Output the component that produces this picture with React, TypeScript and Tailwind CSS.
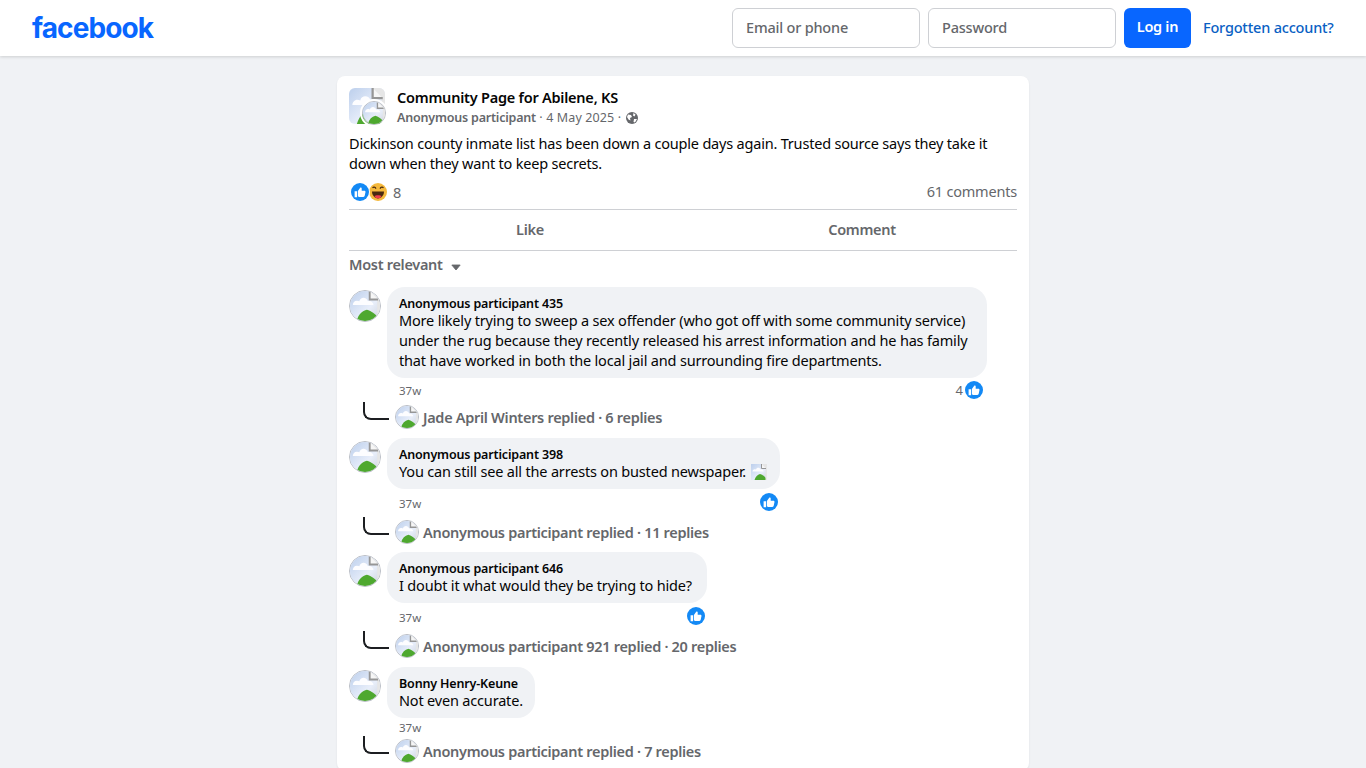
import { ReactNode } from "react";

const FONT = "font-['Noto_Sans','Open_Sans',sans-serif]";

// broken image placeholder, stretched to a circle for the avatars
function BrokenPicture({ className }: { className: string }) {
  return (
    <svg viewBox="0 0 32 32" className={className}>
      <defs>
        <linearGradient id="sky" x1="0" y1="0" x2="1" y2="1">
          <stop offset="0" stopColor="#bccfec" />
          <stop offset="0.6" stopColor="#e8eefa" />
          <stop offset="1" stopColor="#cdd2da" />
        </linearGradient>
      </defs>
      <rect width="32" height="32" fill="url(#sky)" />
      <path d="M3 15c0-3 3-6 7-4 1-5 8-5 9 0 3-1 6 1 6 4z" fill="#fdfdff" />
      <path d="M7 32c2-7 6-11 11-12 5 1 9 5 14 10v2z" fill="#4ea82f" />
      <path d="M21 0h11v32h-3V9h-8z" fill="#e6e6e6" />
      <path d="M21 0v9h9" fill="#f6f6f6" stroke="#969696" strokeWidth="2" />
    </svg>
  );
}

function Avatar({ size }: { size: "lg" | "sm" }) {
  return (
    <div
      className={
        size === "lg"
          ? "w-8 h-8 flex-shrink-0 rounded-full overflow-hidden border border-[#b9bdc5]"
          : "w-6 h-6 flex-shrink-0 rounded-full overflow-hidden border border-[#b9bdc5]"
      }
    >
      <BrokenPicture className="w-full h-full" />
    </div>
  );
}

function LikeBadge({ className }: { className: string }) {
  return (
    <svg viewBox="0 0 18 18" className={className}>
      <circle cx="9" cy="9" r="9" fill="#1389f5" />
      <path
        d="M3.600 8.200h2.500v6H3.600zM6.900 14V8l2.300-3.300c.4-.6 1.500-.3 1.500.7v2.300h2.700c.8 0 1.300.7 1.100 1.400l-.8 3.700c-.1.700-.7 1.100-1.300 1.100H8c-.6 0-1.100-.1-1.100-.9z"
        fill="#fff"
      />
    </svg>
  );
}

function HahaBadge() {
  return (
    <svg viewBox="0 0 18 18" className="w-[18px] h-[18px]">
      <circle cx="9" cy="9" r="9" fill="#f5b93d" />
      <path d="M3 8.600h12c0 3.800-2.600 6.800-6 6.800s-6-3-6-6.800z" fill="#4a2a10" />
      <path d="M5.500 13.200c1-1.400 6-1.400 7 0-1 1.600-2.200 2.200-3.500 2.200s-2.500-.6-3.500-2.200z" fill="#ef3b4f" />
      <path d="M3.500 4.800c1-1 2.500-1 3.500.8M11 5.600c1-1.800 2.500-1.800 3.500-.8" fill="none" stroke="#4a2a10" strokeWidth="1.200" />
    </svg>
  );
}

function Globe() {
  return (
    <svg viewBox="0 0 12 12" className="w-3 h-3 ml-[5px]">
      <circle cx="6" cy="6" r="6" fill="#65676b" />
      <path d="M2 2.500l3 .5 1 2-2 1 .5 2.500-2-1L1 5zM7.500 1l2 1.500-1 2-1.500-1zM8 7h3l-2 3.500-1.500-.5z" fill="#fff" />
    </svg>
  );
}

interface Comment {
  name: string;
  text: ReactNode;
  bubbleClass: string;
  metaClass: string;
  timeClass: string;
  reactionClass?: string;
  replyClass: string;
  count?: string;
  replies: string;
}

const COMMENTS: Comment[] = [
  {
    name: "Anonymous participant 435",
    text: (
      <>
        More likely trying to sweep a sex offender (who got off with some community service)
        <br />
        under the rug because they recently released his arrest information and he has family
        <br />
        that have worked in both the local jail and surrounding fire departments.
      </>
    ),
    bubbleClass: "w-[600px]",
    metaClass: "h-[25px] w-[596px]",
    timeClass: "pt-[5px]",
    reactionClass: "pt-[3px]",
    replyClass: "h-[35px]",
    count: "4",
    replies: "Jade April Winters replied · 6 replies",
  },
  {
    name: "Anonymous participant 398",
    text: (
      <span className="flex items-end">
        You can still see all the arrests on busted newspaper.
        <BrokenPicture className="w-4 h-4 ml-[5px] mb-[1px]" />
      </span>
    ),
    bubbleClass: "w-[393px]",
    metaClass: "h-[29px] w-[391px]",
    timeClass: "pt-[7px]",
    reactionClass: "pt-[4px]",
    replyClass: "h-[34px]",
    replies: "Anonymous participant replied · 11 replies",
  },
  {
    name: "Anonymous participant 646",
    text: "I doubt it what would they be trying to hide?",
    bubbleClass: "w-[320px]",
    metaClass: "h-[29px] w-[318px]",
    timeClass: "pt-[7px]",
    reactionClass: "pt-[4px]",
    replyClass: "h-[35px]",
    replies: "Anonymous participant 921 replied · 20 replies",
  },
  {
    name: "Bonny Henry-Keune",
    text: "Not even accurate.",
    bubbleClass: "w-[148px]",
    metaClass: "h-[19px] w-[148px]",
    timeClass: "pt-[2px]",
    replyClass: "h-[34px]",
    replies: "Anonymous participant replied · 7 replies",
  },
];

function CommentRow({ comment }: { comment: Comment }) {
  return (
    <div>
      <div className="flex gap-[6px]">
        <div className="pt-[3px]">
          <Avatar size="lg" />
        </div>
        <div
          className={`bg-[#f0f2f5] rounded-[18px] px-3 pt-[9px] pb-[8px] text-[14.5px] tracking-[-0.18px] leading-[20px] text-[#050505] ${comment.bubbleClass}`}
        >
          <div className="-mb-[2px] text-[12.5px] tracking-[-0.16px] leading-[16px] font-semibold">{comment.name}</div>
          <div className="whitespace-nowrap">{comment.text}</div>
        </div>
      </div>
      <div className={`ml-[38px] flex items-start justify-between ${comment.metaClass}`}>
        <span className={`pl-3 text-[11.5px] leading-[16px] text-[#65676b] ${comment.timeClass}`}>37w</span>
        {comment.reactionClass && (
          <span className={`flex items-center gap-[2px] text-[13px] leading-[18px] text-[#65676b] ${comment.reactionClass}`}>
            {comment.count}
            <LikeBadge className="w-[18px] h-[18px]" />
          </span>
        )}
      </div>
      <div className={`flex items-start ${comment.replyClass}`}>
        <div className="-mt-[1px] ml-[14px] w-[26px] h-[18px] border-l-2 border-b-2 border-[#1c1e21] rounded-bl-[8px]" />
        <div className="ml-[6px] mt-[2px]">
          <Avatar size="sm" />
        </div>
        <span className="ml-[4px] mt-[4px] text-[14.5px] tracking-[-0.3px] leading-[20px] font-semibold text-[#65676b] whitespace-nowrap">
          {comment.replies}
        </span>
      </div>
    </div>
  );
}

export default function App() {
  return (
    <div className={`h-screen overflow-hidden bg-[#f0f2f5] ${FONT}`}>
      <header className="h-14 bg-white shadow-[0_1px_3px_rgba(0,0,0,0.15)] flex items-center justify-between pl-[32px] pr-[32px]">
        <span className="font-['Inter',sans-serif] font-bold text-[28px] leading-none tracking-[-0.9px] text-[#0866ff]">
          facebook
        </span>
        <div className="flex items-center gap-2">
          <input
            placeholder="Email or phone"
            className="w-[188px] h-10 px-[13px] pb-[2px] bg-white border border-[#ced0d4] rounded-md text-[14.5px] tracking-[-0.2px] font-medium placeholder:text-[#65676b]"
          />
          <input
            placeholder="Password"
            className="w-[188px] h-10 px-[13px] pb-[2px] bg-white border border-[#ced0d4] rounded-md text-[14.5px] tracking-[-0.2px] font-medium placeholder:text-[#65676b]"
          />
          <button className="w-[67px] h-10 pb-[2px] bg-[#0866ff] rounded-md text-white text-[14.5px] tracking-[-0.3px] font-semibold">
            Log in
          </button>
          <a className="ml-1 w-[131px] whitespace-nowrap text-[14.5px] tracking-[-0.2px] font-medium text-[#0a5fc4]">
            Forgotten account?
          </a>
        </div>
      </header>

      <main className="flex justify-center pt-5">
        <article className="w-[692px] bg-white rounded-lg px-3 pt-3 shadow-[0_1px_2px_rgba(0,0,0,0.08)]">
          <div className="flex gap-3">
            <div className="relative w-9 h-9">
              <BrokenPicture className="w-9 h-9 rounded-md" />
              <div className="absolute right-[-3px] bottom-[-3px] rounded-full border-2 border-white">
                <Avatar size="sm" />
              </div>
            </div>
            <div className="-mt-[1px]">
              <div className="text-[14.5px] tracking-[-0.23px] leading-5 font-semibold text-[#050505]">
                Community Page for Abilene, KS
              </div>
              <div className="mt-[1px] -mb-[1px] flex items-center text-[12.5px] leading-5 text-[#65676b]">
                <span className="font-semibold tracking-[-0.2px]">Anonymous participant</span>
                <span className="tracking-[0.12px]">&nbsp;· 4 May 2025 ·</span>
                <Globe />
              </div>
            </div>
          </div>

          <p className="mt-[6px] text-[14.5px] tracking-[-0.2px] leading-5 text-[#050505]">
            Dickinson county inmate list has been down a couple days again. Trusted source says they take it
            <br />
            down when they want to keep secrets.
          </p>

          <div className="mt-[7px] h-[29px] flex items-start justify-between pt-[2px] text-[14.5px] tracking-[-0.2px] leading-5 text-[#65676b]">
            <div className="flex items-center">
              <span className="ml-[1px] rounded-full border border-white z-10">
                <LikeBadge className="w-[18px] h-[18px]" />
              </span>
              <span className="-ml-[1px]">
                <HahaBadge />
              </span>
              <span className="ml-[6px]">8</span>
            </div>
            <span className="-mt-[1px]">61 comments</span>
          </div>

          <div className="h-[42px] flex border-y border-[#ced0d4] text-[14.5px] tracking-[-0.3px] font-semibold text-[#65676b]">
            <div className="flex-1 flex items-center justify-center pl-[26px]">Like</div>
            <div className="flex-1 flex items-center justify-center pl-[22px]">Comment</div>
          </div>

          <div className="h-9 flex items-start pt-[3px] text-[14.5px] tracking-[-0.3px] leading-5 font-semibold text-[#65676b]">
            Most relevant
            <svg viewBox="0 0 12 8" className="w-[10px] h-[7px] ml-2 mt-[10px]">
              <path d="M1 1h10L6 7z" fill="#65676b" stroke="#65676b" strokeLinejoin="round" />
            </svg>
          </div>

          {COMMENTS.map((c) => (
            <CommentRow key={c.name} comment={c} />
          ))}
        </article>
      </main>
    </div>
  );
}
